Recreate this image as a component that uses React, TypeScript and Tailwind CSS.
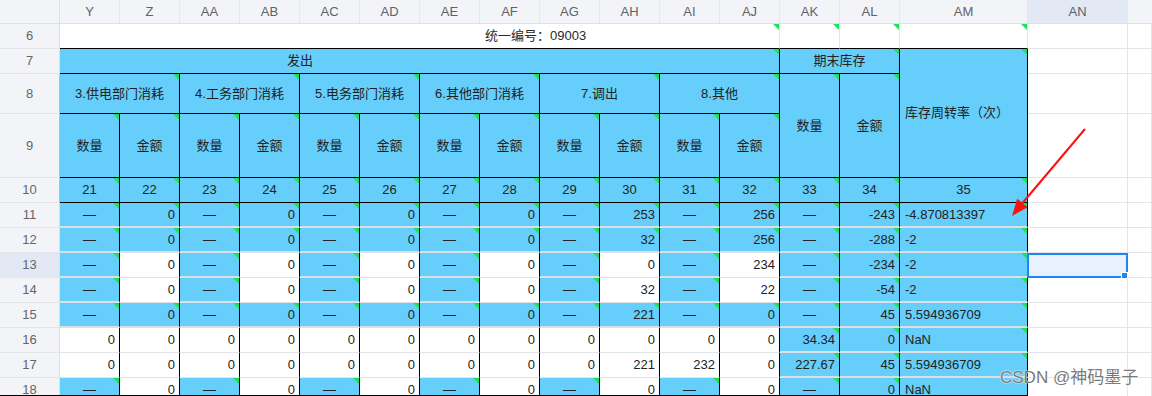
import clsx from 'clsx'
import type { ReactNode } from 'react'

const letters = ['Y', 'Z', 'AA', 'AB', 'AC', 'AD', 'AE', 'AF', 'AG', 'AH', 'AI', 'AJ', 'AK', 'AL', 'AM', 'AN']
const colW = [...Array(14).fill('w-[60px]'), 'w-[128px]', 'w-[100px]']

const groups = ['3.供电部门消耗', '4.工务部门消耗', '5.电务部门消耗', '6.其他部门消耗', '7.调出', '8.其他']

type Fill = 'all' | 'alt' | 'none'
type DataRow = { n: number; fill: Fill; vals: string[]; rate: string }

// Y..AL values, then the AM rate
const rows: DataRow[] = [
  { n: 11, fill: 'all', vals: ['—', '0', '—', '0', '—', '0', '—', '0', '—', '253', '—', '256', '—', '-243'], rate: '-4.870813397' },
  { n: 12, fill: 'all', vals: ['—', '0', '—', '0', '—', '0', '—', '0', '—', '32', '—', '256', '—', '-288'], rate: '-2' },
  { n: 13, fill: 'alt', vals: ['—', '0', '—', '0', '—', '0', '—', '0', '—', '0', '—', '234', '—', '-234'], rate: '-2' },
  { n: 14, fill: 'alt', vals: ['—', '0', '—', '0', '—', '0', '—', '0', '—', '32', '—', '22', '—', '-54'], rate: '-2' },
  { n: 15, fill: 'all', vals: ['—', '0', '—', '0', '—', '0', '—', '0', '—', '221', '—', '0', '—', '45'], rate: '5.594936709' },
  { n: 16, fill: 'none', vals: ['0', '0', '0', '0', '0', '0', '0', '0', '0', '0', '0', '0', '34.34', '0'], rate: 'NaN' },
  { n: 17, fill: 'none', vals: ['0', '0', '0', '0', '0', '0', '0', '0', '0', '221', '232', '0', '227.67', '45'], rate: '5.594936709' },
  { n: 18, fill: 'alt', vals: ['—', '0', '—', '0', '—', '0', '—', '0', '—', '0', '—', '0', '—', '0'], rate: 'NaN' },
]

function isBlue(fill: Fill, i: number) {
  if (i >= 12) return true
  if (fill === 'all') return true
  if (fill === 'none') return false
  return i % 2 === 0
}

function Tri() {
  return (
    <span className="absolute top-0 right-0 w-[6px] h-[6px] bg-[#1de35c] [clip-path:polygon(0_0,100%_0,100%_100%)]" />
  )
}

function HCell({ className, children, tri = true }: { className?: string; children?: ReactNode; tri?: boolean }) {
  return (
    <div
      className={clsx(
        'relative flex items-center justify-center shrink-0 border-r border-b border-black bg-[#66cefa] text-[13px] text-[#222]',
        className,
      )}
    >
      {children}
      {tri && <Tri />}
    </div>
  )
}

function RowHead({ n, h, active, dark }: { n: number; h: string; active?: boolean; dark?: boolean }) {
  return (
    <div
      className={clsx(
        'flex items-center justify-center w-[60px] shrink-0 border-b border-b-[#e3e5e9] border-r text-[13px] text-[#666]',
        dark ? 'border-r-[#b9bcc1]' : 'border-r-[#dcdfe3]',
        active ? 'bg-[#e2e9f5]' : 'bg-[#f3f4f7]',
        h,
      )}
    >
      {n}
    </div>
  )
}

function Blank({ className }: { className?: string }) {
  return <div className={clsx('shrink-0 border-r border-b border-[#e3e5e8] bg-white', className)} />
}

export default function App() {
  return (
    <div className="relative h-[396px] w-[1152px] overflow-hidden bg-white font-['Liberation_Sans','Noto_Sans_CJK_SC',sans-serif]">
      {/* Column letters */}
      <div className="flex h-[24px]">
        <div className="w-[60px] shrink-0 border-r border-b border-[#dcdfe3] bg-[#f3f4f7]" />
        {letters.map((l, i) => (
          <div
            key={l}
            className={clsx(
              'flex items-center justify-center shrink-0 border-r border-r-[#e6e8eb] border-b border-b-[#dcdfe3] text-[13px] text-[#606266]',
              colW[i],
              l === 'AN' ? 'bg-[#e2e9f5]' : 'bg-[#f3f4f7]',
            )}
          >
            {l}
          </div>
        ))}
        <div className="flex-1 border-b border-[#dcdfe3] bg-[#f3f4f7]" />
      </div>

      {/* Row 6 */}
      <div className="flex h-[25px]">
        <RowHead n={6} h="h-[25px]" />
        <div className="relative flex items-center w-[720px] shrink-0 border-r border-r-[#e3e5e8] border-b border-b-black pl-[425px] text-[13px] text-[#2a2a2a]">
          统一编号：09003
          <Tri />
        </div>
        {['w-[60px]', 'w-[60px]', 'w-[128px]'].map((w, i) => (
          <div key={i} className={clsx('relative shrink-0 border-r border-r-[#e3e5e8] border-b border-b-black', w)}>
            <Tri />
          </div>
        ))}
        <Blank className="w-[100px] h-[25px]" />
        <Blank className="flex-1 h-[25px]" />
      </div>

      {/* Rows 7-9: header block */}
      <div className="flex h-[129px]">
        <div className="flex flex-col w-[60px] shrink-0">
          <RowHead n={7} h="h-[25px]" />
          <RowHead n={8} h="h-[40px]" dark />
          <RowHead n={9} h="h-[64px]" dark />
        </div>
        <div className="flex flex-col w-[720px] shrink-0">
          <HCell className="h-[25px] !justify-start pl-[227px]">发出</HCell>
          <div className="flex flex-1">
            {groups.map((g) => (
              <div key={g} className="flex flex-col w-[120px] shrink-0">
                <HCell className="h-[40px]">{g}</HCell>
                <div className="flex flex-1">
                  <HCell className="w-[60px]">数量</HCell>
                  <HCell className="w-[60px]">金额</HCell>
                </div>
              </div>
            ))}
          </div>
        </div>
        <div className="flex flex-col w-[120px] shrink-0">
          <HCell className="h-[25px]">期末库存</HCell>
          <div className="flex flex-1">
            <HCell className="w-[60px]">数量</HCell>
            <HCell className="w-[60px]">金额</HCell>
          </div>
        </div>
        <HCell className="w-[128px] !justify-start pl-[5px]">库存周转率（次）</HCell>
        <div className="flex flex-col w-[100px] shrink-0">
          <Blank className="h-[25px]" />
          <Blank className="h-[40px]" />
          <Blank className="h-[64px]" />
        </div>
        <div className="flex flex-col flex-1">
          <Blank className="h-[25px]" />
          <Blank className="h-[40px]" />
          <Blank className="h-[64px]" />
        </div>
      </div>

      {/* Row 10: column numbers */}
      <div className="flex h-[25px]">
        <RowHead n={10} h="h-[25px]" dark />
        {Array.from({ length: 15 }, (_, i) => (
          <HCell key={i} className={colW[i]}>
            {21 + i}
          </HCell>
        ))}
        <Blank className="w-[100px]" />
        <Blank className="flex-1" />
      </div>

      {/* Data rows */}
      {rows.map((r) => (
        <div key={r.n} className="flex h-[25px]">
          <RowHead n={r.n} h="h-[25px]" active={r.n === 13} />
          {r.vals.map((v, i) => {
            const blue = isBlue(r.fill, i)
            return (
              <div
                key={i}
                className={clsx(
                  'relative flex items-center shrink-0 border-r border-r-black text-[13px] text-[#222]',
                  colW[i],
                  v === '—' ? 'justify-center' : 'justify-end pr-1',
                  blue ? 'bg-[#66cefa] border-b-2 border-b-[#dbe0e4]' : 'bg-white border-b border-b-[#e1e4e7]',
                )}
              >
                {v}
                {blue && <Tri />}
              </div>
            )
          })}
          <div className="relative flex items-center w-[128px] shrink-0 pl-[5px] border-r border-r-black bg-[#66cefa] border-b-2 border-b-[#dbe0e4] text-[13px] text-[#222]">
            {r.rate}
            <Tri />
          </div>
          <div className="relative w-[100px] shrink-0 border-r border-b border-[#e3e5e8] bg-white">
            {r.n === 13 && (
              <div className="absolute -left-px top-0 -right-px -bottom-px border-2 border-[#1c86f2] bg-[#e8f1fd]">
                <span className="absolute -right-[2px] -bottom-[3px] w-[7px] h-[7px] bg-[#1c86f2] border border-white" />
              </div>
            )}
          </div>
          <Blank className="flex-1" />
        </div>
      ))}

      {/* bottom frame edge */}
      <div className="absolute left-0 bottom-0 w-[1028px] h-px bg-black" />

      {/* annotation arrow */}
      <svg className="absolute left-0 top-0 pointer-events-none" width="1152" height="396">
        <line x1="1085" y1="129" x2="1020" y2="206" stroke="#ff1010" strokeWidth="2" />
        <polygon points="1012,216 1027.5,207.2 1017.2,198.8" fill="#ff1010" />
      </svg>

      {/* watermark */}
      <div className="absolute left-[1000px] top-[366px] text-[17px] leading-[24px] text-[#7a7a7a] whitespace-nowrap [text-shadow:0_0_2px_#fff,0_0_1px_#fff] font-['Liberation_Sans','Noto_Sans_CJK_SC',sans-serif]">
        CSDN @神码墨子
      </div>
    </div>
  )
}
